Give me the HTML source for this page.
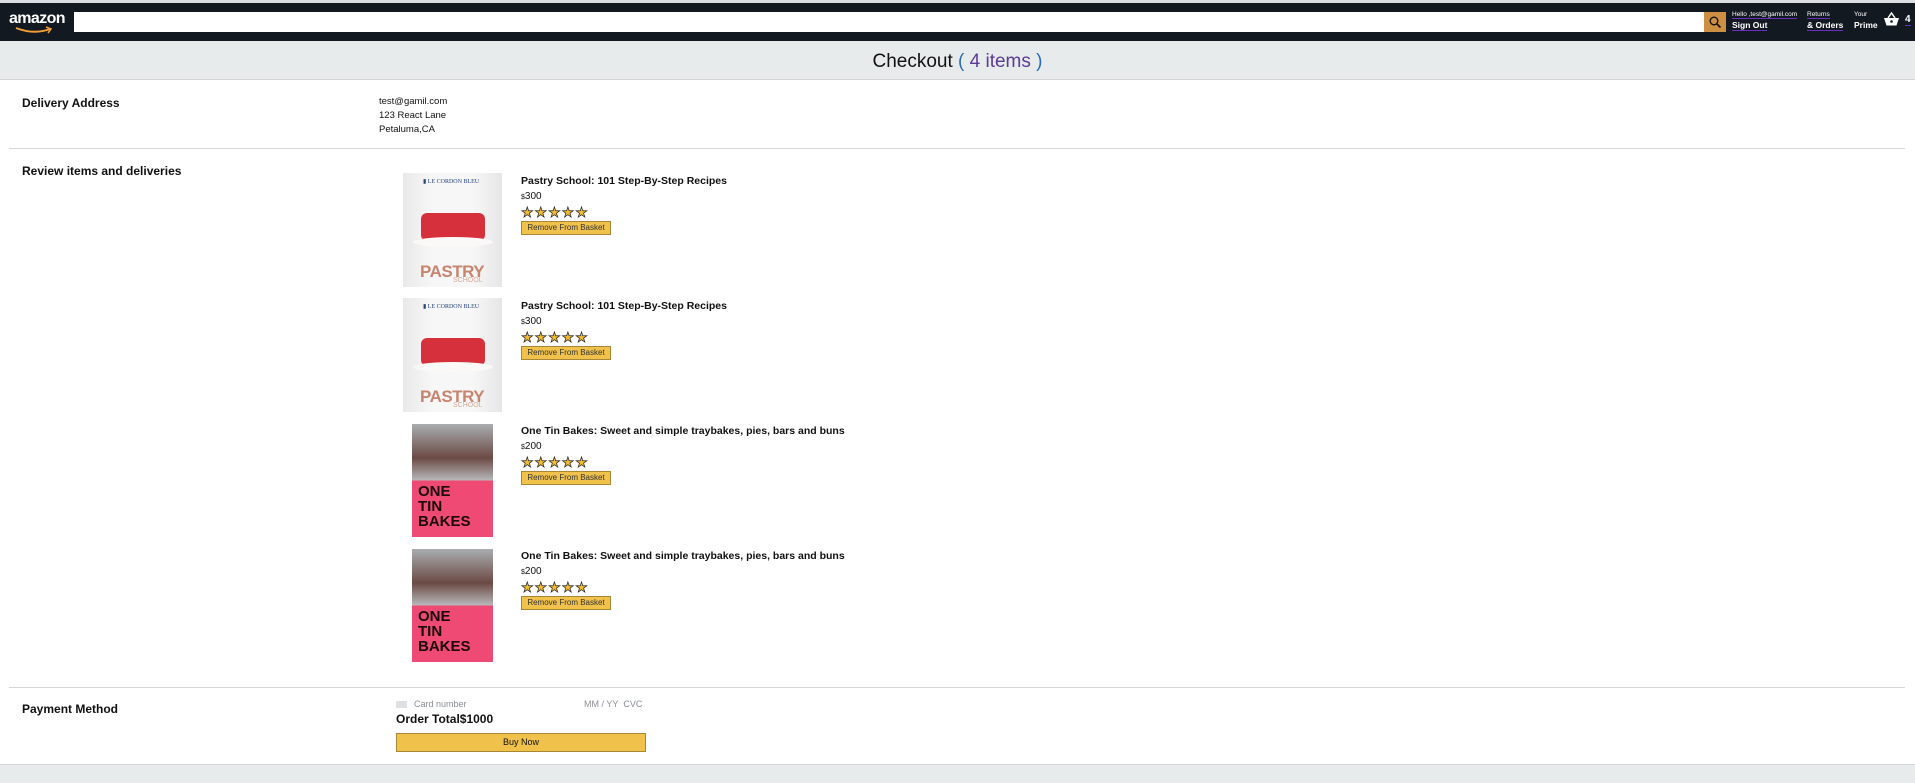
<!DOCTYPE html>
<html><head><meta charset="utf-8">
<style>
*{margin:0;padding:0;box-sizing:border-box}
body{width:1915px;height:783px;background:#fff;font-family:"Liberation Sans",sans-serif;position:relative;overflow:hidden;color:#111}
.a{position:absolute;white-space:nowrap}
.nav{left:0;top:0;width:1915px;height:41px;background:#131921;border-top:3px solid #dcdfe1}
.b{font-weight:bold}
.hl{border-bottom:1px solid #6a2fc0}
.btn{background:#f0c14b;border:1px solid #a88734;font-size:8px;color:#333;text-align:center;line-height:12px}
.star{font-size:14px;color:#f3bd2f;letter-spacing:1px;-webkit-text-stroke:0.7px #222}
.pas{background:linear-gradient(90deg,#e9e9ea 0,#f7f7f7 30%,#f7f7f7 70%,#e6e6e8 100%)}
</style></head><body>
<div class="a nav"></div>
<div class="a" style="left:9px;top:10px;color:#fff;font-size:16px;font-weight:bold;letter-spacing:-0.6px">amazon</div>
<svg class="a" style="left:14px;top:26px" width="40" height="9"><path d="M2 2 Q20 9 36 3" stroke="#f19e39" stroke-width="2" fill="none"/><path d="M32 1 L37 3 L34 7" stroke="#f19e39" stroke-width="1.5" fill="none"/></svg>
<div class="a" style="left:74px;top:12px;width:1631px;height:20px;background:#fff"></div>
<div class="a" style="left:1704px;top:12px;width:22px;height:20px;background:#cd9042"></div>
<svg class="a" style="left:1708px;top:15px" width="14" height="14"><circle cx="6" cy="6" r="3.8" stroke="#111" stroke-width="1.4" fill="none"/><path d="M9 9 L12.5 12.5" stroke="#111" stroke-width="1.6"/></svg>
<div class="a" style="left:1732px;top:11px;color:#fff;font-size:6.5px"><span class="hl">Hello ,test@gamil.com</span></div>
<div class="a b" style="left:1732px;top:20px;color:#fff;font-size:8.5px"><span class="hl">Sign Out</span></div>
<div class="a" style="left:1807px;top:11px;color:#fff;font-size:6.5px"><span class="hl">Returns</span></div>
<div class="a b" style="left:1807px;top:20px;color:#fff;font-size:8.5px"><span class="hl">&amp; Orders</span></div>
<div class="a" style="left:1854px;top:11px;color:#fff;font-size:6.5px">Your</div>
<div class="a b" style="left:1854px;top:20px;color:#fff;font-size:8.5px">Prime</div>
<svg class="a" style="left:1884px;top:12px" width="15" height="14"><path d="M4 6 L7.5 1 L11 6" stroke="#fff" stroke-width="1.5" fill="none"/><path d="M0 6 H15 L12.5 13.5 H2.5 Z" fill="#fff"/><circle cx="7.5" cy="9.5" r="1.3" fill="#131921"/></svg>
<div class="a b" style="left:1905px;top:14px;color:#fff;font-size:10px"><span class="hl">4</span></div>

<div class="a" style="left:0;top:41px;width:1915px;height:39px;background:#e8ebec;border-bottom:1px solid #d6d6d6"></div>
<div class="a" style="left:0;top:51px;width:1915px;text-align:center;font-size:19px;color:#111">Checkout <span style="color:#2b6cb0">(</span> <span style="color:#5b3a9a">4 items</span> <span style="color:#2b6cb0">)</span></div>

<div class="a b" style="left:22px;top:96px;font-size:12px">Delivery Address</div>
<div class="a" style="left:379px;top:95px;font-size:9.5px;line-height:14px">test@gamil.com<br>123 React Lane<br>Petaluma,CA</div>
<div class="a" style="left:9px;top:148px;width:1896px;height:1px;background:#d6d6d6"></div>
<div class="a b" style="left:22px;top:164px;font-size:12px">Review items and deliveries</div>

<div class="a pas" style="left:403px;top:173px;width:99px;height:114px">
 <div class="a" style="left:20px;top:5px;font-size:6px;color:#22407a;font-family:'Liberation Serif',serif">▮ LE CORDON BLEU</div>
 <div class="a" style="left:18px;top:40px;width:64px;height:28px;background:#d7303d;border-radius:6px"></div>
 <div class="a" style="left:10px;top:64px;width:80px;height:10px;background:#fbf9f7;border-radius:50%"></div>
 <div class="a b" style="left:17px;top:89px;font-size:17px;color:#c7846f;letter-spacing:-0.5px">PASTRY</div>
 <div class="a" style="left:50px;top:104px;font-size:7px;color:#d8a898">SCHOOL</div>
</div>
<div class="a pas" style="left:403px;top:298px;width:99px;height:114px">
 <div class="a" style="left:20px;top:5px;font-size:6px;color:#22407a;font-family:'Liberation Serif',serif">▮ LE CORDON BLEU</div>
 <div class="a" style="left:18px;top:40px;width:64px;height:28px;background:#d7303d;border-radius:6px"></div>
 <div class="a" style="left:10px;top:64px;width:80px;height:10px;background:#fbf9f7;border-radius:50%"></div>
 <div class="a b" style="left:17px;top:89px;font-size:17px;color:#c7846f;letter-spacing:-0.5px">PASTRY</div>
 <div class="a" style="left:50px;top:104px;font-size:7px;color:#d8a898">SCHOOL</div>
</div>
<div class="a" style="left:412px;top:424px;width:81px;height:113px;background:linear-gradient(#a9adb0 0,#6b4a44 30%,#b8b9bb 50%,#ee4a74 50%)">
 <div class="a b" style="left:6px;top:60px;font-size:15px;line-height:15px;color:#1a0a0a">ONE<br>TIN<br>BAKES</div>
</div>
<div class="a" style="left:412px;top:549px;width:81px;height:113px;background:linear-gradient(#a9adb0 0,#6b4a44 30%,#b8b9bb 50%,#ee4a74 50%)">
 <div class="a b" style="left:6px;top:60px;font-size:15px;line-height:15px;color:#1a0a0a">ONE<br>TIN<br>BAKES</div>
</div>

<div class="a" style="left:521px;top:174px;line-height:15px">
 <div class="b" style="font-size:10.5px">Pastry School: 101 Step-By-Step Recipes</div>
 <div style="font-size:10px"><span style="font-size:7px">$</span>300</div>
 <div class="star">★★★★★</div>
 <div class="btn" style="width:90px;height:14px;margin-top:1px">Remove From Basket</div>
</div>
<div class="a" style="left:521px;top:299px;line-height:15px">
 <div class="b" style="font-size:10.5px">Pastry School: 101 Step-By-Step Recipes</div>
 <div style="font-size:10px"><span style="font-size:7px">$</span>300</div>
 <div class="star">★★★★★</div>
 <div class="btn" style="width:90px;height:14px;margin-top:1px">Remove From Basket</div>
</div>
<div class="a" style="left:521px;top:424px;line-height:15px">
 <div class="b" style="font-size:10.5px">One Tin Bakes: Sweet and simple traybakes, pies, bars and buns</div>
 <div style="font-size:10px"><span style="font-size:7px">$</span>200</div>
 <div class="star">★★★★★</div>
 <div class="btn" style="width:90px;height:14px;margin-top:1px">Remove From Basket</div>
</div>
<div class="a" style="left:521px;top:549px;line-height:15px">
 <div class="b" style="font-size:10.5px">One Tin Bakes: Sweet and simple traybakes, pies, bars and buns</div>
 <div style="font-size:10px"><span style="font-size:7px">$</span>200</div>
 <div class="star">★★★★★</div>
 <div class="btn" style="width:90px;height:14px;margin-top:1px">Remove From Basket</div>
</div>

<div class="a" style="left:9px;top:687px;width:1896px;height:1px;background:#d6d6d6"></div>
<div class="a b" style="left:22px;top:702px;font-size:12px">Payment Method</div>
<div class="a" style="left:396px;top:701px;width:11px;height:7px;background:#dde1e4"></div>
<div class="a" style="left:414px;top:699px;font-size:9px;color:#8a8f95">Card number</div>
<div class="a" style="left:584px;top:699px;font-size:9px;color:#8a8f95">MM / YY&nbsp; CVC</div>
<div class="a b" style="left:396px;top:712px;font-size:12px">Order Total$1000</div>
<div class="a btn" style="left:396px;top:733px;width:250px;height:19px;line-height:17px;font-size:9px;color:#111">Buy Now</div>
<div class="a" style="left:0;top:764px;width:1915px;height:19px;background:#e8ebec;border-top:1px solid #d6d6d6"></div>
</body></html>
